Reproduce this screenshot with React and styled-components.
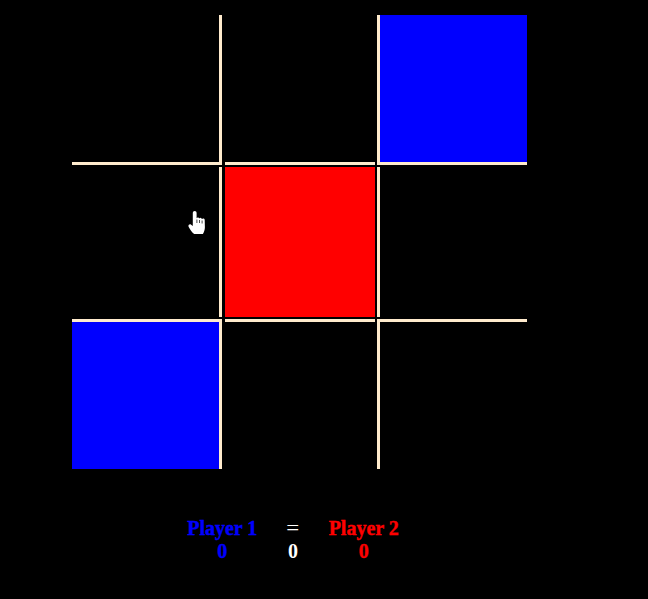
import styled, { createGlobalStyle } from "styled-components";

const GlobalStyle = createGlobalStyle`
  html, body {
    margin: 0;
    background: #000;
  }
`;

const Page = styled.div`
  position: relative;
  width: 648px;
  height: 599px;
  overflow: hidden;
  background: #000;
  padding: 15px 0 0 72px;
  box-sizing: border-box;
  font-family: "Liberation Serif", "Times New Roman", serif;
`;

const Board = styled.div`
  display: grid;
  grid-template-columns: 150px 151px 150px;
  grid-template-rows: repeat(3, 150px);
  column-gap: 2px;
  row-gap: 2px;
  width: 455px;
`;

const Cell = styled.div`
  box-sizing: border-box;
  background: ${(props) => props.$fill || "#000"};
  border-style: solid;
  border-color: blanchedalmond;
  border-width: ${(props) => props.$borders};
  margin-left: ${(props) => (props.$middle ? "1px" : "0")};
`;

const Score = styled.div`
  display: flex;
  justify-content: center;
  gap: 30px;
  width: 212px;
  margin: 48px 0 0 115px;
  font-size: 20px;
  font-weight: bold;
  text-align: center;
`;

const ScoreColumn = styled.div`
  color: ${(props) => props.$color};
  line-height: 23px;
  -webkit-text-stroke: ${(props) => props.$stroke};
`;

const EqualsSign = styled.div`
  font-weight: normal;
  transform: scaleX(1.15);
`;

const Pointer = styled.svg`
  position: absolute;
  left: 188px;
  top: 210px;
`;

const cells = [
  { borders: "0 3px 3px 0" },
  { borders: "0 0 3px 0", middle: true },
  { borders: "0 0 3px 3px", fill: "#00f" },
  { borders: "0 3px 0 0" },
  { borders: "0", middle: true, fill: "#f00" },
  { borders: "0 0 0 3px" },
  { borders: "3px 3px 0 0", fill: "#00f" },
  { borders: "3px 0 0 0", middle: true },
  { borders: "3px 0 0 3px" },
];

export default function App() {
  return (
    <Page>
      <GlobalStyle />
      <Board>
        {cells.map((cell, i) => (
          <Cell key={i} $borders={cell.borders} $fill={cell.fill} $middle={cell.middle} />
        ))}
      </Board>
      <Score>
        <ScoreColumn $color="#00f" $stroke="0.4px #00f">
          <div>Player 1</div>
          <div>0</div>
        </ScoreColumn>
        <ScoreColumn $color="#fff" $stroke="0">
          <EqualsSign>=</EqualsSign>
          <div>0</div>
        </ScoreColumn>
        <ScoreColumn $color="#f00" $stroke="0.4px #f00">
          <div>Player 2</div>
          <div>0</div>
        </ScoreColumn>
      </Score>
      <Pointer width="18" height="25" viewBox="0 0 18 25">
        <path
          d="M4.800 2.800a1.900 1.900 0 0 1 3.800 0V8.200a1.500 1.500 0 0 1 2.700 .3a1.500 1.500 0 0 1 2.700 .6a1.500 1.500 0 0 1 2.700 .9L16.900 17c0 2.800-.8 4.900-2 7H6.200C4 22.300 2.300 20 .6 16.700c-.7-1.600 1-3.100 2.500-2L4.800 16z"
          fill="#fff"
        />
        <path d="M8.900 9.500v3.500M11.500 10v3M14.100 10.500v3" stroke="#000" strokeWidth="0.7" fill="none" />
      </Pointer>
    </Page>
  );
}
